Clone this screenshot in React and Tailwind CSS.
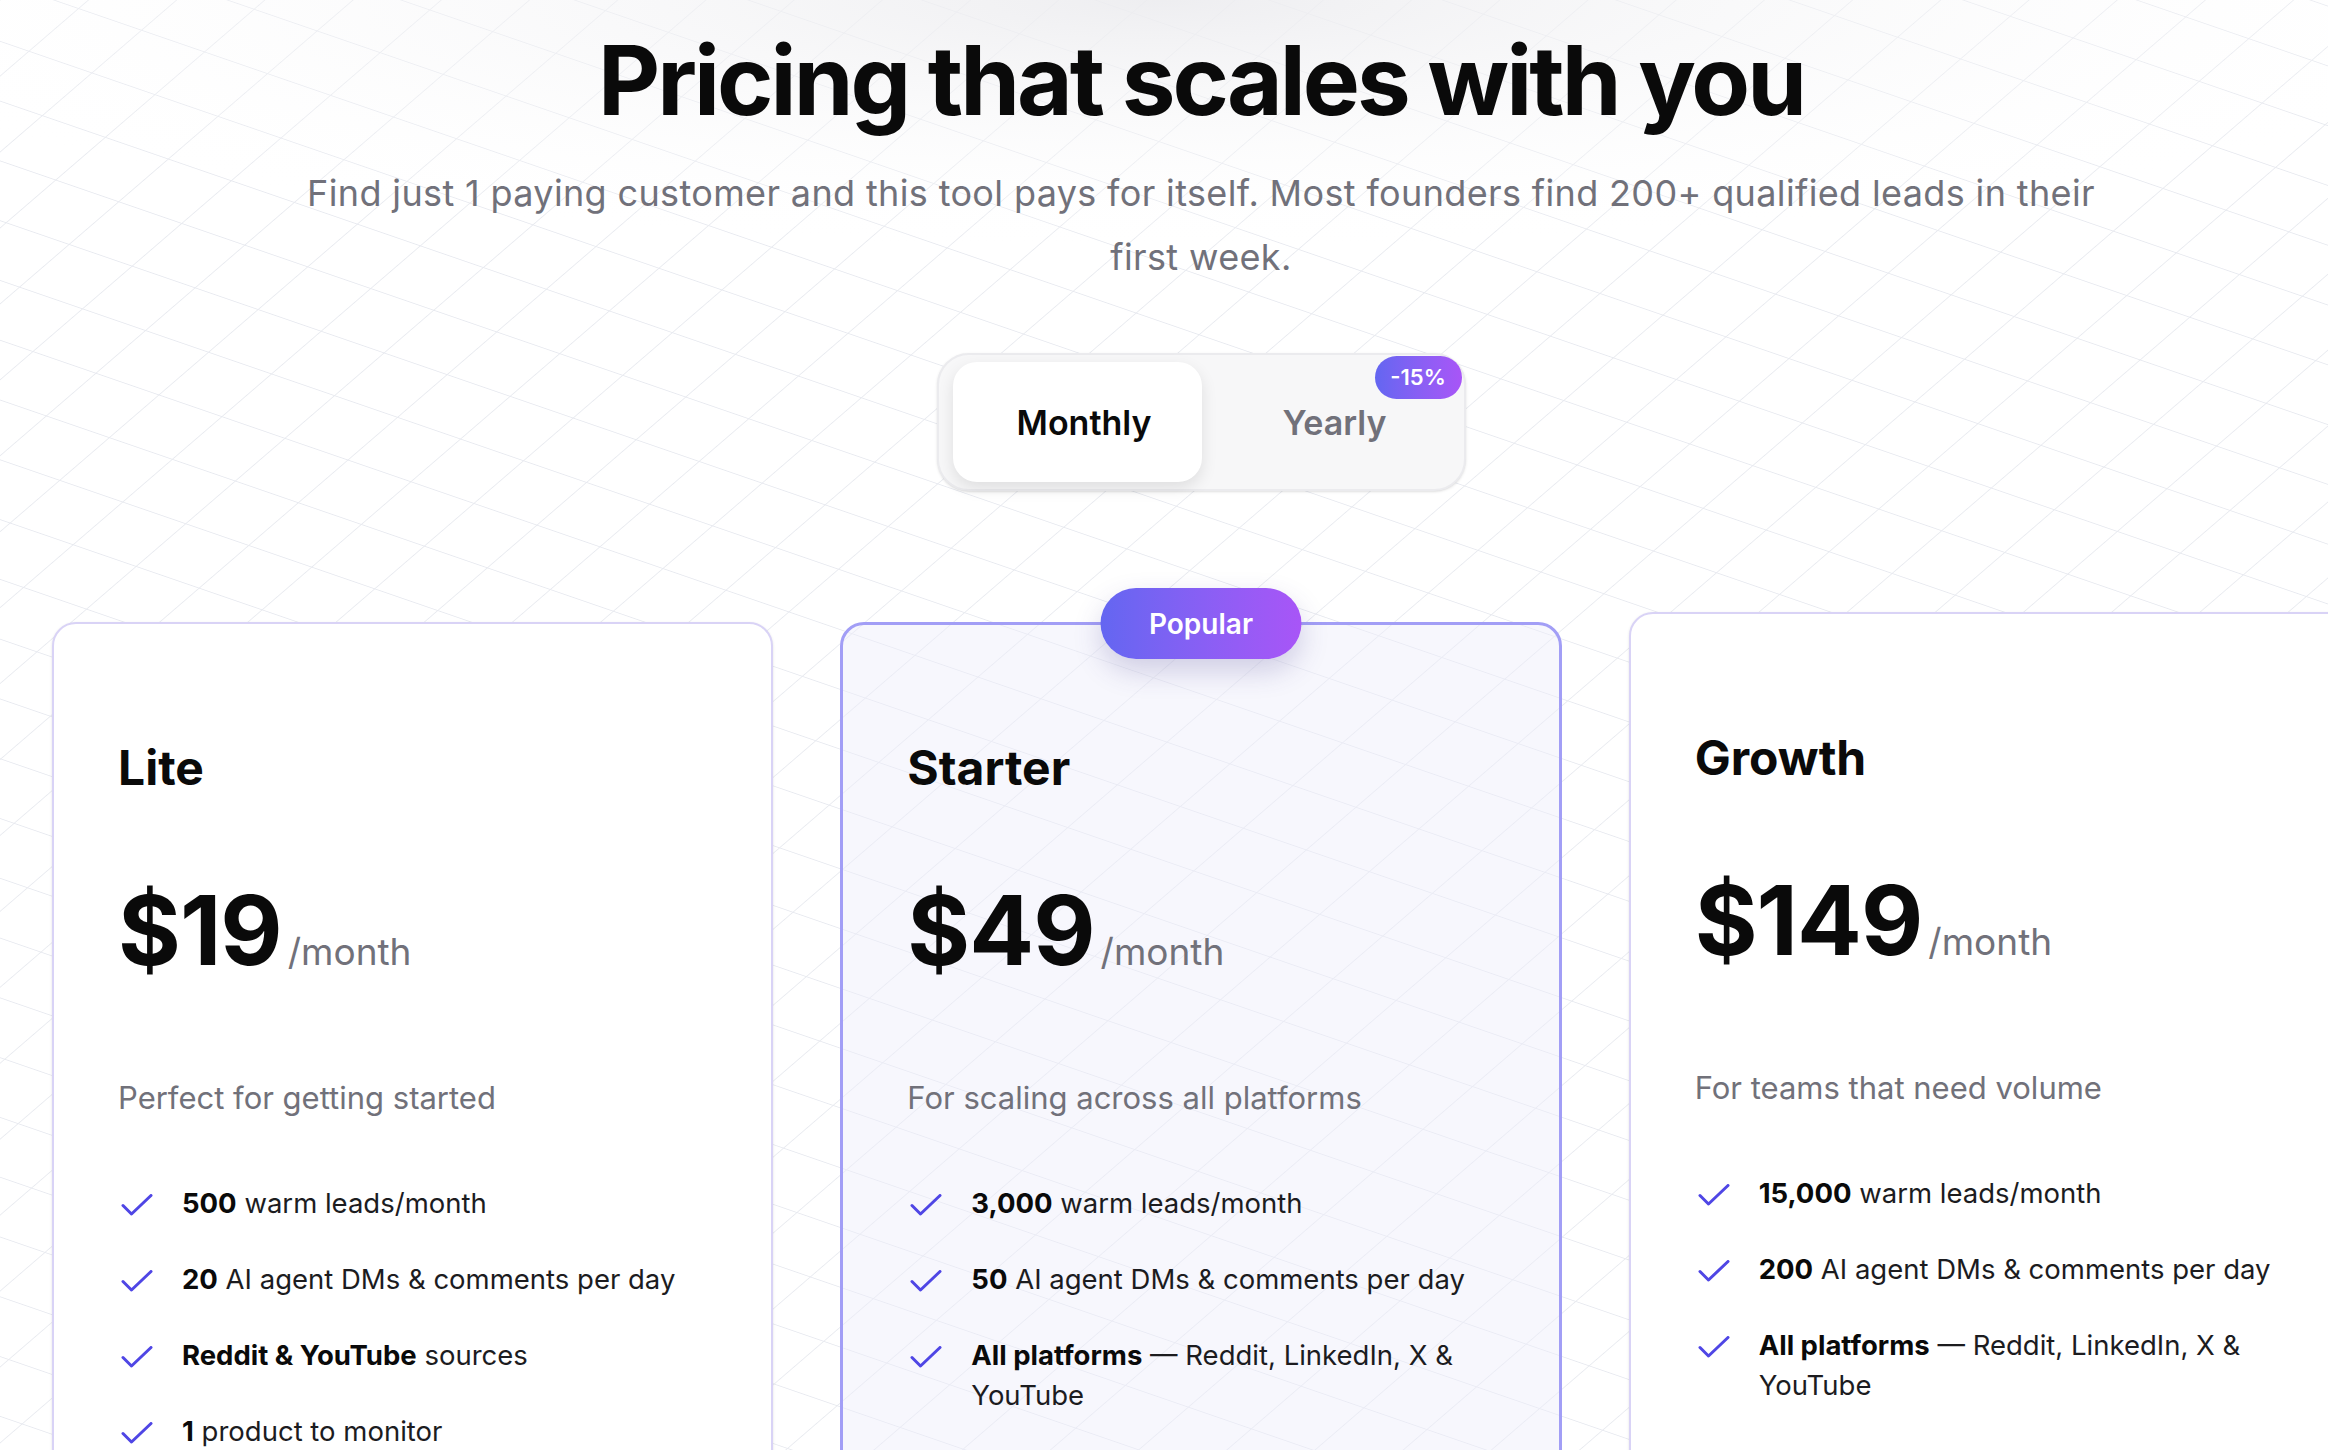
import React from 'react';

const Check = () => (
  <svg width="32" height="22" viewBox="0 0 32 22" fill="none" className="shrink-0 mt-[11px] ml-[3px]">
    <polyline points="2,11.5 10.5,20 30,1.5" stroke="#4f46e5" strokeWidth="3" strokeLinecap="round" strokeLinejoin="round" />
  </svg>
);

const plans = [
  {
    name: 'Lite',
    price: '$19',
    desc: 'Perfect for getting started',
    features: [
      [<b key="b">500</b>, ' warm leads/month'],
      [<b key="b">20</b>, ' AI agent DMs & comments per day'],
      [<b key="b">Reddit & YouTube</b>, ' sources'],
      [<b key="b">1</b>, ' product to monitor'],
    ],
  },
  {
    name: 'Starter',
    price: '$49',
    desc: 'For scaling across all platforms',
    popular: true,
    features: [
      [<b key="b">3,000</b>, ' warm leads/month'],
      [<b key="b">50</b>, ' AI agent DMs & comments per day'],
      [<b key="b">All platforms</b>, ' — Reddit, LinkedIn, X & YouTube'],
      [<b key="b">3</b>, ' products to monitor'],
    ],
  },
  {
    name: 'Growth',
    price: '$149',
    desc: 'For teams that need volume',
    lifted: true,
    features: [
      [<b key="b">15,000</b>, ' warm leads/month'],
      [<b key="b">200</b>, ' AI agent DMs & comments per day'],
      [<b key="b">All platforms</b>, ' — Reddit, LinkedIn, X & YouTube'],
      [<b key="b">10</b>, ' products to monitor'],
    ],
  },
];

const PlanCard = ({ plan }) => (
  <div
    className={
      plan.popular
        ? 'relative rounded-[24px] border-[3px] border-[#a29ef6] bg-[#ededfb]/45 px-[64px] pt-[113px] h-[1000px]'
        : plan.lifted
        ? 'relative rounded-[24px] border-2 border-[#d9d3f6] bg-white px-[64px] pt-[114px] h-[1000px] -translate-y-[10px] shadow-sm'
        : 'relative rounded-[24px] border-2 border-[#d9d3f6] bg-white px-[64px] pt-[114px] h-[1000px] shadow-sm'
    }
  >
    {plan.popular && (
      <div className="absolute -top-[37px] left-1/2 -translate-x-1/2 w-[201px] h-[71px] rounded-full bg-linear-to-r from-[#6366f1] to-[#a855f7] text-white text-[28px] font-semibold flex items-center justify-center shadow-[0_12px_28px_rgba(70,60,140,0.22)]">
        Popular
      </div>
    )}
    <h3 className="text-[48px] leading-[60px] font-bold text-[#0a0a0a]">{plan.name}</h3>
    <div className="mt-[84px] flex items-baseline">
      <span className="text-[96px] leading-none font-bold tracking-[-0.01em] text-[#0a0a0a]">{plan.price}</span>
      <span className="ml-1.5 text-[37px] text-[#71717a]">/month</span>
    </div>
    <p className="mt-[94px] text-[31px] leading-[48px] text-[#71717a]">{plan.desc}</p>
    <ul className="mt-[61px] flex flex-col gap-[36px]">
      {plan.features.map((f, i) => (
        <li key={i} className="flex items-start gap-[29px]">
          <Check />
          <span className="text-[27.5px] leading-[40px] text-[#1c1c1f] [&_b]:font-bold [&_b]:text-[#0a0a0a]">{f}</span>
        </li>
      ))}
    </ul>
  </div>
);

export default function App() {
  return (
    <div className="relative w-full h-[1450px] overflow-hidden bg-white font-['Inter',sans-serif]">
      {/* background grid */}
      <svg className="absolute inset-0 w-full h-full" aria-hidden="true">
        <defs>
          <pattern id="grid" width="100" height="100" patternUnits="userSpaceOnUse" patternTransform="matrix(0.63 0.217 0.496 -0.427 2013.3 316.7)">
            <path d="M0 0 H100 M0 0 V100" stroke="#e8eaf0" strokeWidth="2.8" fill="none" />
          </pattern>
          <radialGradient id="topglow" cx="50%" cy="0%" r="60%" fx="50%" fy="0%">
            <stop offset="0%" stopColor="#ececef" stopOpacity="0.9" />
            <stop offset="100%" stopColor="#ffffff" stopOpacity="0" />
          </radialGradient>
        </defs>
        <rect width="100%" height="100%" fill="url(#grid)" />
        <rect width="100%" height="420" fill="url(#topglow)" />
      </svg>

      <div className="relative w-[2402px] shrink-0">
        <h1 className="pt-[32px] text-center text-[96px] leading-none font-bold tracking-[-0.031em] text-[#0a0a0a]">
          Pricing that scales with you
        </h1>
        <p className="mt-[33px] text-center text-[36px] leading-[64px] tracking-[0.01em] text-[#71717a]">
          Find just 1 paying customer and this tool pays for itself. Most founders find 200+ qualified leads in their
          <br />
          first week.
        </p>

        <div className="relative mx-auto mt-[64px] flex w-[529px] h-[138px] rounded-[32px] border-2 border-[#ebebee] bg-[#f7f7f8] px-[14px] py-[7px] shadow-sm">
          <button className="w-[249px] h-[120px] pl-[14px] rounded-[24px] bg-white text-[34px] font-semibold text-[#0a0a0a] shadow-[0_6px_16px_rgba(0,0,0,0.10)]">
            Monthly
          </button>
          <button className="flex-1 pl-[18px] text-[34px] font-semibold text-[#71717a]">Yearly</button>
          <span className="absolute top-[1px] right-[2px] w-[87px] h-[43px] rounded-full bg-linear-to-r from-[#6366f1] to-[#a855f7] text-white text-[22px] font-semibold flex items-center justify-center">
            -15%
          </span>
        </div>

        <div className="mt-[131px] grid grid-cols-3 gap-[67px] px-[52px]">
          {plans.map((p) => (
            <PlanCard key={p.name} plan={p} />
          ))}
        </div>
      </div>
    </div>
  );
}
